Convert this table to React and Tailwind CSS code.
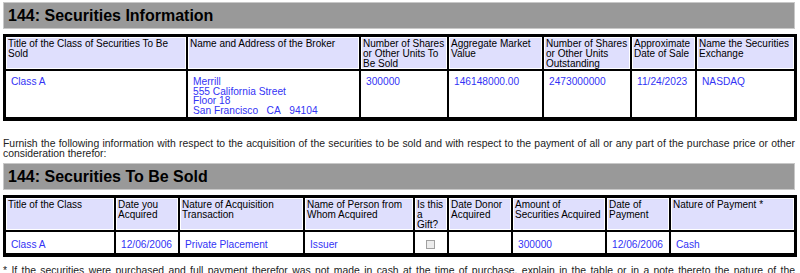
import React from "react";

// --- Section title bar ---
const SectionBar = ({ title }) => (
  <div className="h-[27px] bg-[#999999] border border-[#c8c8c8] pl-[4px] flex items-center">
    <h2 className="text-[16px] font-bold text-black leading-none">{title}</h2>
  </div>
);

const Th = ({ w, children }) => (
  <th
    className={`${w} align-top text-left font-normal text-black bg-[#dfdffd] border border-black shadow-[inset_0_0_0_1px_white] px-[2px] pt-[2px] text-[10px] leading-[10px] h-[33px]`}
  >
    {children}
  </th>
);

const Td = ({ children, center }) => (
  <td
    className={`${center ? "align-middle" : "align-top"} border border-black bg-white px-[5px] pt-[6px] pb-[2px] text-[10.2px] leading-[9.6px] text-[#3333f5]`}
  >
    {children}
  </td>
);

const Table = ({ children }) => (
  <table className="w-full table-fixed border-separate border-spacing-0 border-[2px] border-b-[3px] border-black">
    {children}
  </table>
);

export default function App() {
  return (
    <div
      className="bg-white w-[800px] h-[273px] overflow-hidden pt-[2px] pl-[3px] pr-[5px]"
      style={{ fontFamily: '"Liberation Sans", Arial, sans-serif' }}
    >
      <SectionBar title="144: Securities Information" />

      <div className="mt-[5px]">
        <Table>
          <thead>
            <tr>
              <Th w="w-[182px]">Title of the Class of Securities To Be Sold</Th>
              <Th w="w-[173px]">Name and Address of the Broker</Th>
              <Th w="w-[88px]">Number of Shares or Other Units To Be Sold</Th>
              <Th w="w-[95px]">Aggregate Market Value</Th>
              <Th w="w-[88px]">Number of Shares or Other Units Outstanding</Th>
              <Th w="w-[65px]">Approximate Date of Sale</Th>
              <Th w="w-[99px]">Name the Securities Exchange</Th>
            </tr>
          </thead>
          <tbody>
            <tr className="h-[48px]">
              <Td>Class A</Td>
              <Td>
                Merrill
                <br />
                555 California Street
                <br />
                Floor 18
                <br />
                San Francisco&nbsp;&nbsp;&nbsp;CA&nbsp;&nbsp;&nbsp;94104
              </Td>
              <Td>300000</Td>
              <Td>146148000.00</Td>
              <Td>2473000000</Td>
              <Td>11/24/2023</Td>
              <Td>NASDAQ</Td>
            </tr>
          </tbody>
        </Table>
      </div>

      <p className="mt-[18px] text-[10.4px] leading-[10px] text-[#222] text-justify">
        Furnish the following information with respect to the acquisition of the securities to be sold and with
        respect to the payment of all or any part of the purchase price or other consideration therefor:
      </p>

      <div className="mt-[4px]">
        <SectionBar title="144: Securities To Be Sold" />
      </div>

      <div className="mt-[5px]">
        <Table>
          <thead>
            <tr>
              <Th w="w-[110px]">Title of the Class</Th>
              <Th w="w-[64px]">Date you Acquired</Th>
              <Th w="w-[125px]">Nature of Acquisition Transaction</Th>
              <Th w="w-[110px]">Name of Person from Whom Acquired</Th>
              <Th w="w-[34px]">Is this a Gift?</Th>
              <Th w="w-[64px]">Date Donor Acquired</Th>
              <Th w="w-[94px]">Amount of Securities Acquired</Th>
              <Th w="w-[64px]">Date of Payment</Th>
              <Th w="w-[125px]">Nature of Payment *</Th>
            </tr>
          </thead>
          <tbody>
            <tr className="h-[23px]">
              <Td center>Class A</Td>
              <Td center>12/06/2006</Td>
              <Td center>Private Placement</Td>
              <Td center>Issuer</Td>
              <Td center>
                <div className="w-[9px] h-[9px] border border-[#a0a0a0] bg-[#ececec] ml-[6px]" />
              </Td>
              <Td center></Td>
              <Td center>300000</Td>
              <Td center>12/06/2006</Td>
              <Td center>Cash</Td>
            </tr>
          </tbody>
        </Table>
      </div>

      <p className="mt-[9px] text-[10.4px] leading-[10px] text-[#222] text-justify">
        * If the securities were purchased and full payment therefor was not made in cash at the time of purchase,
        explain in the table or in a note thereto the nature of the consideration given. If the consideration
        consisted of any note or other obligation, or if payment was made in installments describe the arrangement
        and state when the note or other obligation was discharged in full or the last installment paid.
      </p>
    </div>
  );
}
